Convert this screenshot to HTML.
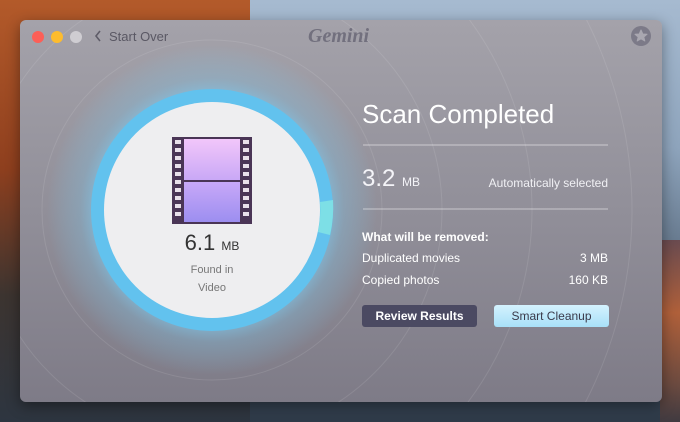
<!DOCTYPE html>
<html><head><style>
*{margin:0;padding:0;box-sizing:border-box}
html,body{width:680px;height:422px;overflow:hidden}
body{position:relative;font-family:"Liberation Sans",sans-serif;
background:linear-gradient(180deg,#a6bad0 0%,#8ea4bc 35%,#4a5a6c 75%,#2e3a48 100%);}
.rock{position:absolute;left:0;top:0;width:250px;height:422px;background:linear-gradient(180deg,#b35a2a 0%,#8e3f1e 40%,#3c3430 70%,#2d3540 100%);}
.rockr{position:absolute;right:0;top:240px;width:20px;height:182px;background:linear-gradient(180deg,#6a4b50,#b0603a 40%,#6a4a40 80%,#403a40)}
.win{position:absolute;left:20px;top:20px;width:642px;height:382px;border-radius:6px;overflow:hidden;
background:linear-gradient(180deg,#a4a2aa 0%,#918f99 50%,#7e7b87 100%);box-shadow:0 4px 14px rgba(0,0,0,.4)}
.dot{position:absolute;top:11px;width:12px;height:12px;border-radius:50%}
.t{position:absolute;color:#fff}
</style></head><body>
<div class="rock"></div><div class="rockr"></div>
<div class="win">
<svg width="642" height="382" style="position:absolute;left:0;top:0">
<defs><radialGradient id="g" cx="192" cy="190" r="165" gradientUnits="userSpaceOnUse">
<stop offset="0.65" stop-color="#7fc8ec" stop-opacity=".9"/><stop offset="0.8" stop-color="#7fbfe0" stop-opacity=".35"/><stop offset="1" stop-color="#7fc8ec" stop-opacity="0"/></radialGradient>
<linearGradient id="f1" x1="0" y1="0" x2="0" y2="1"><stop offset="0" stop-color="#f2c6fa"/><stop offset="1" stop-color="#c9a8f6"/></linearGradient>
<linearGradient id="f2" x1="0" y1="0" x2="0" y2="1"><stop offset="0" stop-color="#c8a8f8"/><stop offset="1" stop-color="#9c8ef0"/></linearGradient></defs>
<g fill="none" stroke="rgba(255,255,255,.1)"><circle cx="192" cy="190" r="170"/><circle cx="192" cy="190" r="230"/><circle cx="192" cy="190" r="320"/><circle cx="192" cy="190" r="420"/><circle cx="192" cy="190" r="520"/></g>
<circle cx="192" cy="190" r="165" fill="url(#g)"/>
<circle cx="192" cy="190" r="121" fill="#62c2ee"/>
<path d="M313 180 A121 121 0 0 1 310 215 L298 212 A108 108 0 0 0 300 182 Z" fill="#7ddfe6"/>
<circle cx="192" cy="190" r="108" fill="#eeeef0"/>
<rect x="152" y="117" width="80" height="87" fill="#4a3556"/>
<rect x="164" y="119" width="56" height="41" fill="url(#f1)"/>
<rect x="164" y="162" width="56" height="40" fill="url(#f2)"/>
<g fill="#e8e0ea">
<rect x="155" y="120" width="6" height="4"/><rect x="155" y="128" width="6" height="4"/><rect x="155" y="136" width="6" height="4"/><rect x="155" y="144" width="6" height="4"/><rect x="155" y="152" width="6" height="4"/><rect x="155" y="160" width="6" height="4"/><rect x="155" y="168" width="6" height="4"/><rect x="155" y="176" width="6" height="4"/><rect x="155" y="184" width="6" height="4"/><rect x="155" y="192" width="6" height="4"/>
<rect x="223" y="120" width="6" height="4"/><rect x="223" y="128" width="6" height="4"/><rect x="223" y="136" width="6" height="4"/><rect x="223" y="144" width="6" height="4"/><rect x="223" y="152" width="6" height="4"/><rect x="223" y="160" width="6" height="4"/><rect x="223" y="168" width="6" height="4"/><rect x="223" y="176" width="6" height="4"/><rect x="223" y="184" width="6" height="4"/><rect x="223" y="192" width="6" height="4"/></g>
<circle cx="621" cy="16" r="10" fill="#7c7a88"/>
<path d="M621 10 L622.8 14 L627 14.3 L623.8 17 L624.8 21 L621 18.8 L617.2 21 L618.2 17 L615 14.3 L619.2 14 Z" fill="#a9a7b0" stroke="#a9a7b0" stroke-linejoin="round"/>
<path d="M80 11 L76 16 L80 21" stroke="#5e5c68" stroke-width="1.6" fill="none"/>
<line x1="343" y1="125" x2="588" y2="125" stroke="rgba(255,255,255,.5)"/>
<line x1="343" y1="189" x2="588" y2="189" stroke="rgba(255,255,255,.5)"/>
</svg>
<div class="dot" style="left:12px;background:#fc5f57"></div>
<div class="dot" style="left:31px;background:#fdbc2e"></div>
<div class="dot" style="left:50px;background:#cfcdd2"></div>
<div class="t" style="left:89px;top:9px;font-size:13px;color:#5a5864">Start Over</div>
<div class="t" style="left:288px;top:5px;font-size:20px;font-style:italic;font-weight:bold;color:#72707e;font-family:'Liberation Serif',serif">Gemini</div>
<div class="t" style="left:155px;top:210px;width:74px;text-align:center;font-size:22px;color:#333">6.1 <span style="font-size:12px">MB</span></div>
<div class="t" style="left:142px;top:244px;width:100px;text-align:center;font-size:11px;color:#777">Found in</div>
<div class="t" style="left:142px;top:262px;width:100px;text-align:center;font-size:11px;color:#777">Video</div>
<div class="t" style="left:342px;top:79px;font-size:26px">Scan Completed</div>
<div class="t" style="left:342px;top:145px;font-size:24px;color:#f4f4f8">3.2 <span style="font-size:12px">MB</span></div>
<div class="t" style="left:440px;top:156px;width:148px;text-align:right;font-size:12px;color:#f0f0f4">Automatically selected</div>
<div class="t" style="left:342px;top:210px;font-size:12px;font-weight:bold">What will be removed:</div>
<div class="t" style="left:342px;top:231px;font-size:12px">Duplicated movies</div>
<div class="t" style="left:500px;top:231px;width:88px;text-align:right;font-size:12px">3 MB</div>
<div class="t" style="left:342px;top:253px;font-size:12px">Copied photos</div>
<div class="t" style="left:500px;top:253px;width:88px;text-align:right;font-size:12px">160 KB</div>
<div style="position:absolute;left:342px;top:285px;width:115px;height:22px;border-radius:3px;background:#4b4a62;color:#fff;font-size:12px;font-weight:bold;text-align:center;line-height:22px">Review Results</div>
<div style="position:absolute;left:474px;top:285px;width:115px;height:22px;border-radius:3px;background:linear-gradient(#d4f2fe,#a8e0f8);color:#3a3a4a;font-size:12px;text-align:center;line-height:22px">Smart Cleanup</div>
</div>
</body></html>
